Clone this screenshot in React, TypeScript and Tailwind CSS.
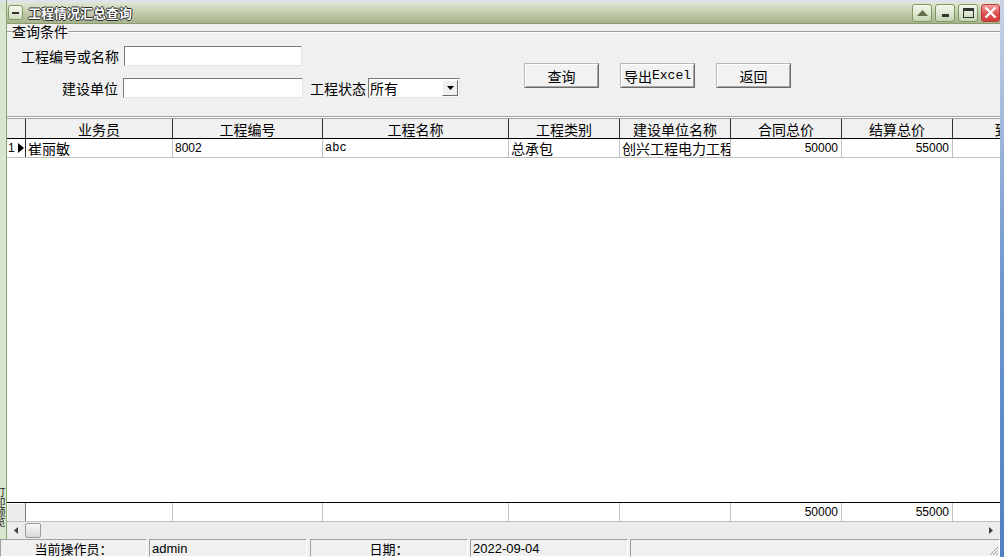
import React from 'react';

const cjk = "font-['Noto_Sans_CJK_SC','Liberation_Sans',sans-serif]";
const sans = "font-['Liberation_Sans','Noto_Sans_CJK_SC',sans-serif]";
const mono = "font-['Liberation_Mono',monospace]";

const columns = [
  { title: '业务员', w: 'w-[147px]', value: '崔丽敏', total: '', align: 'left', font: cjk },
  { title: '工程编号', w: 'w-[150px]', value: '8002', total: '', align: 'left', font: sans },
  { title: '工程名称', w: 'w-[186px]', value: 'abc', total: '', align: 'left', font: mono },
  { title: '工程类别', w: 'w-[111px]', value: '总承包', total: '', align: 'left', font: cjk },
  { title: '建设单位名称', w: 'w-[111px]', value: '创兴工程电力工程有限公司', total: '', align: 'left', font: cjk },
  { title: '合同总价', w: 'w-[111px]', value: '50000', total: '50000', align: 'right', font: sans },
  { title: '结算总价', w: 'w-[111px]', value: '55000', total: '55000', align: 'right', font: sans },
  { title: '到账金额', w: 'w-[140px]', value: '', total: '', align: 'right', font: sans },
];

function TitleButton({ children, red }: { children: React.ReactNode; red?: boolean }) {
  return (
    <div
      className={
        red
          ? 'w-[19px] h-[18px] flex items-center justify-center rounded-[3px] border border-[#b83a3a] bg-gradient-to-b from-[#f3a0a0] via-[#e05454] to-[#d83c3c]'
          : 'w-[20px] h-[18px] flex items-center justify-center rounded-[3px] border border-[#7e9a62] bg-gradient-to-b from-[#f4f7ee] via-[#dfe7d2] to-[#c6d3b2]'
      }
    >
      {children}
    </div>
  );
}

function Button({ children }: { children: React.ReactNode }) {
  return (
    <button className="w-[75px] h-[25px] flex items-center justify-center bg-[#f2f2f2] border border-t-[#b8b8b8] border-l-[#b8b8b8] border-r-[#6a6a6a] border-b-[#6a6a6a] shadow-[inset_1px_1px_0_#ffffff,inset_-1px_-1px_0_#a8a8a8] text-[14px] leading-none text-black">
      {children}
    </button>
  );
}

export default function App() {
  return (
    <div className={`w-[1004px] h-[557px] flex overflow-hidden bg-[#f0f0f0] text-black ${cjk}`}>
      <div className="w-[1000px] flex flex-col">
        <div className="h-[539px] flex">
          {/* left docking strip */}
          <div className="w-[7px] flex flex-col bg-[#d9e6cd] border-r border-[#86a86c]">
            <div className="h-[2px] bg-[#dde2ee]" />
            <div className="flex-1" />
            <div className="h-[50px] mb-[2px] overflow-hidden text-[10px] leading-[12px] text-[#222] [writing-mode:vertical-rl]">打印预览</div>
          </div>

          <div className="flex-1 min-w-0 flex flex-col">
            <div className="h-[2px] bg-[#dde2ee]" />
            {/* title bar */}
            <div className="h-[21px] flex items-center bg-gradient-to-b from-[#e2e8d6] via-[#c3ccac] to-[#a7b48e]">
              <div className="ml-[1px] w-[15px] h-[15px] flex items-center justify-center rounded-[3px] border border-[#7e9a62] bg-gradient-to-b from-[#f6f8f0] to-[#d2ddc2]">
                <div className="w-[7px] h-[2px] bg-[#333]" />
              </div>
              <span className="ml-[5px] text-[13px] leading-none font-bold text-white [text-shadow:1px_0_0_#2a2a2a,-1px_0_0_#2a2a2a,0_1px_0_#2a2a2a,0_-1px_0_#2a2a2a]">
                工程情况汇总查询
              </span>
              <div className="flex-1" />
              <div className="flex gap-[3px] items-center">
                <TitleButton>
                  <svg width="11" height="6" viewBox="0 0 11 6"><path d="M0 6 L5.5 0 L11 6 Z" fill="#5f6f4a" /></svg>
                </TitleButton>
                <TitleButton>
                  <div className="w-[7px] h-[3px] mt-[6px] bg-[#333]" />
                </TitleButton>
                <TitleButton>
                  <div className="w-[11px] h-[10px] border border-[#333] border-t-[3px]" />
                </TitleButton>
                <TitleButton red>
                  <svg width="13" height="13" viewBox="0 0 13 13"><path d="M1.5 1.5 L11.5 11.5 M11.5 1.5 L1.5 11.5" stroke="#fff" strokeWidth="2.4" /></svg>
                </TitleButton>
              </div>
            </div>
            <div className="h-[1px] bg-[#8a9a6e]" />

            {/* query group */}
            <div className="h-[92px] flex flex-col">
              <div className="h-[15px] flex items-center">
                <div className="w-[5px] h-[2px] border-t border-[#a0a0a0] border-b border-b-white" />
                <span className="text-[14px] leading-[15px]">查询条件</span>
                <div className="flex-1 h-[2px] border-t border-[#a0a0a0] border-b border-b-white" />
              </div>
              <div className="mt-[7px] flex items-start">
                <div className="flex flex-col gap-[12px]">
                  <div className="h-[20px] flex items-center">
                    <span className="w-[112px] text-right text-[14px] leading-none">工程编号或名称</span>
                    <div className="ml-[5px] w-[178px] h-[20px] bg-white border border-t-[#7a7a7a] border-l-[#7a7a7a] border-r-[#e4e4e4] border-b-[#e4e4e4]" />
                  </div>
                  <div className="h-[20px] flex items-center">
                    <span className="w-[111px] text-right text-[14px] leading-none">建设单位</span>
                    <div className="ml-[5px] w-[180px] h-[20px] bg-white border border-t-[#7a7a7a] border-l-[#7a7a7a] border-r-[#e4e4e4] border-b-[#e4e4e4]" />
                    <span className="ml-[7px] text-[14px] leading-none">工程状态</span>
                    <div className="ml-[2px] w-[92px] h-[20px] flex items-center bg-white border border-t-[#7a7a7a] border-l-[#7a7a7a] border-r-[#e4e4e4] border-b-[#e4e4e4]">
                      <span className="ml-[1px] text-[14px] leading-none flex-1">所有</span>
                      <div className="mr-[1px] w-[16px] h-[16px] flex items-center justify-center bg-[#f0f0f0] border border-t-white border-l-white border-r-[#6a6a6a] border-b-[#6a6a6a]">
                        <svg width="7" height="4" viewBox="0 0 7 4"><path d="M0 0 L7 0 L3.5 4 Z" fill="#000" /></svg>
                      </div>
                    </div>
                  </div>
                </div>
                <div className="ml-[64px] mt-[17px] flex gap-[21px]">
                  <Button>查询</Button>
                  <Button>
                    导出<span className={`${mono} text-[13px]`}>Excel</span>
                  </Button>
                  <Button>返回</Button>
                </div>
              </div>
            </div>

            <div className="h-[2px] border-t border-[#a0a0a0] border-b border-b-white" />

            {/* grid header */}
            <div className="h-[21px] flex overflow-hidden bg-[#f0f0f0] border-t border-[#a0a0a0] border-b border-b-black">
              <div className="w-[19px] flex-none border-r border-[#303030]" />
              {columns.map((c) => (
                <div key={c.title} className={`${c.w} flex-none border-r border-[#303030] flex items-center justify-center text-[14px] leading-none whitespace-nowrap`}>
                  {c.title}
                </div>
              ))}
            </div>

            {/* data row */}
            <div className="h-[19px] flex overflow-hidden bg-white border-b border-[#c0c0c0]">
              <div className="w-[19px] flex-none border-r border-[#303030] flex items-center">
                <span className={`${sans} text-[12px] leading-none ml-[1px]`}>1</span>
                <svg className="ml-[3px]" width="6" height="10" viewBox="0 0 6 10"><path d="M0 0 L6 5 L0 10 Z" fill="#000" /></svg>
              </div>
              {columns.map((c) => (
                <div
                  key={c.title}
                  className={`${c.w} flex-none border-r border-[#c0c0c0] flex items-center overflow-hidden whitespace-nowrap ${c.align === 'right' ? 'justify-end pr-[3px]' : 'pl-[2px]'}`}
                >
                  <span className={`${c.font} ${c.font === cjk ? 'text-[14px]' : 'text-[12px]'} leading-none`}>{c.value}</span>
                </div>
              ))}
            </div>

            <div className="flex-1 bg-white" />

            {/* footer totals */}
            <div className="h-[20px] flex overflow-hidden bg-white border-t border-black border-b border-b-[#c0c0c0]">
              <div className="w-[19px] flex-none bg-[#ececec] border-r border-[#808080] shadow-[inset_1px_1px_0_#ffffff]" />
              {columns.map((c) => (
                <div key={c.title} className={`${c.w} flex-none border-r border-[#c0c0c0] flex items-center justify-end pr-[3px]`}>
                  <span className={`${sans} text-[12px] leading-none`}>{c.total}</span>
                </div>
              ))}
            </div>

            {/* horizontal scrollbar */}
            <div className="h-[17px] flex items-center bg-[#ececec]">
              <div className="w-[18px] h-full flex items-center justify-center">
                <svg width="4" height="7" viewBox="0 0 4 7"><path d="M4 0 L0 3.5 L4 7 Z" fill="#404040" /></svg>
              </div>
              <div className="w-[16px] h-[15px] rounded-[2px] border border-[#9a9a9a] bg-gradient-to-b from-[#f8f8f8] to-[#d8d8d8]" />
              <div className="flex-1" />
              <div className="w-[18px] h-full flex items-center justify-center">
                <svg width="4" height="7" viewBox="0 0 4 7"><path d="M0 0 L4 3.5 L0 7 Z" fill="#404040" /></svg>
              </div>
            </div>
          </div>
        </div>

        {/* status bar */}
        <div className="h-[18px] flex bg-[#f0f0f0] text-[13px] leading-none">
          <div className="w-[147px] flex items-center justify-center pt-[1px] border border-t-[#a0a0a0] border-l-[#a0a0a0] border-r-white border-b-white">
            当前操作员：
          </div>
          <div className={`ml-[2px] w-[158px] flex items-center pl-[2px] pt-[1px] border border-t-[#a0a0a0] border-l-[#a0a0a0] border-r-white border-b-white ${sans}`}>
            admin
          </div>
          <div className="ml-[3px] w-[158px] flex items-center justify-center pt-[1px] border border-t-[#a0a0a0] border-l-[#a0a0a0] border-r-white border-b-white">
            日期：
          </div>
          <div className={`ml-[2px] w-[158px] flex items-center pl-[2px] pt-[1px] border border-t-[#a0a0a0] border-l-[#a0a0a0] border-r-white border-b-white ${sans}`}>
            2022-09-04
          </div>
          <div className="ml-[2px] flex-1 flex items-end justify-end border border-t-[#a0a0a0] border-l-[#a0a0a0] border-r-white border-b-white">
            <svg width="12" height="12" viewBox="0 0 12 12">
              <path d="M11 3 L3 11 M11 6 L6 11 M11 9 L9 11" stroke="#a0a0a0" strokeWidth="1" />
            </svg>
          </div>
        </div>
      </div>

      {/* right window edge */}
      <div className="w-[4px] bg-gradient-to-b from-[#c9d3e6] via-[#6f97cc] to-[#4f80c2]" />
    </div>
  );
}
